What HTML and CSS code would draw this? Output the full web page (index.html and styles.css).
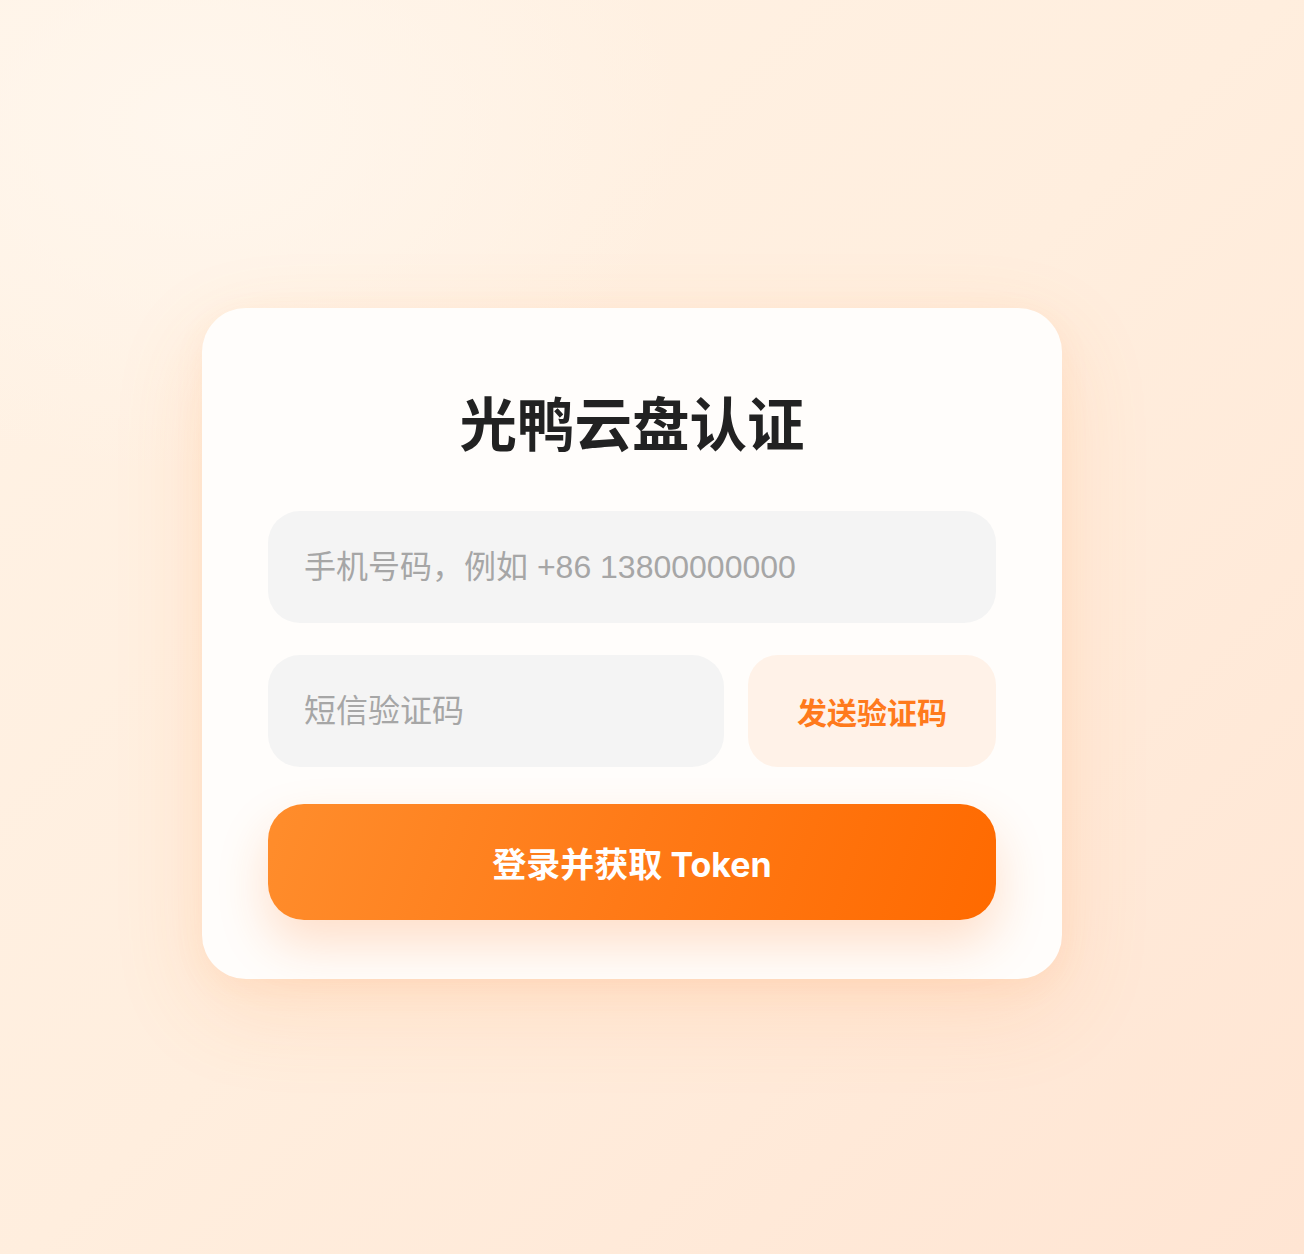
FILE: index.html
```html
<!DOCTYPE html>
<html lang="zh-CN">
<head>
<meta charset="utf-8">
<title>光鸭云盘认证</title>
<link rel="stylesheet" href="styles.css">
</head>
<body>
<main class="page">
  <section class="card">
    <h1 class="title">光鸭云盘认证</h1>
    <form class="form">
      <input class="field" type="text" placeholder="手机号码，例如 +86 13800000000">
      <div class="row">
        <input class="field code" type="text" placeholder="短信验证码">
        <button class="send" type="button">发送验证码</button>
      </div>
      <button class="submit" type="button">登录并获取 Token</button>
    </form>
  </section>
</main>
</body>
</html>
```

FILE: styles.css
```css
* { box-sizing: border-box; }

html, body {
  margin: 0;
  height: 100%;
}

body {
  background:
    radial-gradient(ellipse 700px 500px at 15% 10%, rgba(255, 247, 238, 0.9), rgba(255, 247, 238, 0) 70%),
    linear-gradient(135deg, #fff3e6 0%, #ffeede 50%, #ffe5d3 100%);
  font-family: "Noto Sans CJK SC", sans-serif;
}

.page {
  min-height: 100vh;
  display: flex;
  justify-content: center;
  align-items: flex-start;
  padding: 308px 40px 0 0;
}

.card {
  width: 860px;
  background: #fffdfb;
  border-radius: 44px;
  padding: 80px 66px 59px;
  box-shadow: 0 30px 90px rgba(255, 140, 60, 0.16), 0 8px 30px rgba(255, 150, 80, 0.08);
}

.title {
  margin: 0 0 56px;
  text-align: center;
  font-family: "Noto Sans CJK SC", sans-serif;
  font-weight: 700;
  font-size: 57.5px;
  line-height: 67px;
  color: #222222;
}

.form {
  display: flex;
  flex-direction: column;
}

.row {
  display: flex;
  gap: 24px;
  margin-top: 32px;
}

.field {
  display: block;
  width: 100%;
  height: 112px;
  border: none;
  outline: none;
  background: #f4f4f4;
  border-radius: 32px;
  padding: 0 36px;
  font-family: "Liberation Sans", "Noto Sans CJK SC", sans-serif;
  font-size: 32px;
  color: #333;
}

.field::placeholder {
  color: #a6a6a6;
}

.code {
  flex: 1;
  width: auto;
  min-width: 0;
}

.send {
  flex: 0 0 248px;
  height: 112px;
  border: none;
  border-radius: 30px;
  background: #fff2e8;
  color: #ff7a1c;
  font-family: "Inter", "Noto Sans CJK SC", sans-serif;
  font-weight: 700;
  font-size: 30px;
  cursor: pointer;
  padding: 0;
}

.submit {
  margin-top: 37px;
  height: 116px;
  border: none;
  border-radius: 36px;
  background: linear-gradient(110deg, #ff8d2c 0%, #ff7a17 50%, #ff6a00 100%);
  color: #ffffff;
  font-family: "Inter", "Noto Sans CJK SC", sans-serif;
  font-weight: 700;
  font-size: 34px;
  cursor: pointer;
  box-shadow: 0 24px 50px rgba(255, 120, 30, 0.22);
  padding: 0;
}
```
